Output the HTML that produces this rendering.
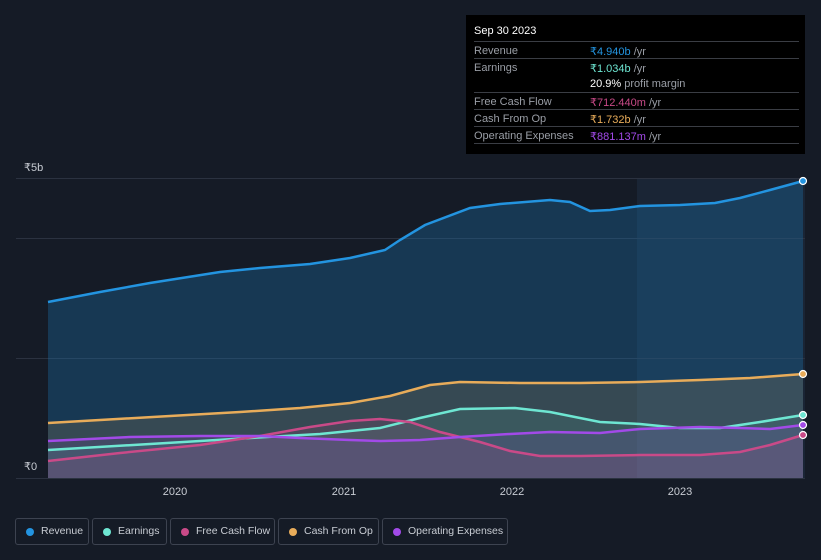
<!DOCTYPE html>
<html><head><style>
body{margin:0;background:#151b26;font-family:"Liberation Sans",sans-serif;width:821px;height:560px;overflow:hidden;position:relative}
.tt{position:absolute;left:466px;top:15px;width:339px;height:139px;background:#000;color:#fff;font-size:11px}
.tt .h{position:absolute;left:8px;top:10px;font-size:11px}
.row{position:absolute;left:8px;width:325px;height:17px;border-top:1px solid #3a3d44;color:#9a9ea6}
.row span{position:absolute;left:116px;top:3px}
.row b{font-weight:normal;position:absolute;left:0;top:3px}
.lg{position:absolute;top:518px;height:27px;border:1px solid #3d4350;border-radius:3px;color:#c8ccd3;font-size:10.5px;box-sizing:border-box;white-space:nowrap}
.lg i{position:absolute;left:10px;top:9px;width:8px;height:8px;border-radius:50%}
.lg span{position:absolute;left:25px;top:6px}
</style></head><body>
<svg width="821" height="560" style="position:absolute;left:0;top:0">
<rect x="637" y="178" width="168" height="300" fill="#1a2535"/>
<g stroke="#2b3240" stroke-width="1"><line x1="16" y1="178.5" x2="805" y2="178.5"/><line x1="16" y1="238.5" x2="805" y2="238.5"/><line x1="16" y1="358.5" x2="805" y2="358.5"/><line x1="16" y1="478.5" x2="805" y2="478.5"/></g>
<text x="24" y="171" fill="#c8ccd3" font-size="11">₹5b</text>
<text x="24" y="470" fill="#c8ccd3" font-size="11">₹0</text>
<g fill="#c8ccd3" font-size="11" text-anchor="middle"><text x="175" y="495">2020</text><text x="344" y="495">2021</text><text x="512" y="495">2022</text><text x="680" y="495">2023</text></g>
<path d="M48,302 L100,292 L150,283 L220,272 L260,268 L310,264 L350,258 L385,250 L400,240 L425,225 L470,208 L500,204 L550,200 L570,202 L590,211 L610,210 L640,206 L680,205 L715,203 L740,198 L770,190 L803,181 L803,478 L48,478Z" fill="#1e6fa8" fill-opacity="0.35"/>
<path d="M48,423 L100,420 L170,416 L240,412 L300,408 L350,403 L390,396 L430,385 L460,382 L520,383 L580,383 L640,382 L700,380 L750,378 L803,374 L803,478 L48,478Z" fill="#e8ac5a" fill-opacity="0.15"/>
<path d="M48,450 L150,444 L250,438 L320,434 L380,428 L420,418 L460,409 L515,408 L550,412 L600,422 L640,424 L680,428 L720,428 L760,422 L803,415 L803,478 L48,478Z" fill="#5ee0c8" fill-opacity="0.1"/>
<path d="M48,461 L120,453 L200,445 L260,436 L310,427 L350,421 L380,419 L410,422 L440,432 L480,442 L510,451 L540,456 L580,456 L640,455 L700,455 L740,452 L770,445 L803,435 L803,478 L48,478Z" fill="#c04a85" fill-opacity="0.15"/>
<path d="M48,441 L130,437 L200,436 L260,436 L300,438 L350,440 L380,441 L420,440 L460,437 L510,434 L550,432 L600,433 L640,429 L700,427 L740,428 L770,429 L803,425 L803,478 L48,478Z" fill="#9b4ae8" fill-opacity="0.12"/>
<g fill="none" stroke-width="2.5">
<path d="M48,302 L100,292 L150,283 L220,272 L260,268 L310,264 L350,258 L385,250 L400,240 L425,225 L470,208 L500,204 L550,200 L570,202 L590,211 L610,210 L640,206 L680,205 L715,203 L740,198 L770,190 L803,181" stroke="#2394e0"/>
<path d="M48,423 L100,420 L170,416 L240,412 L300,408 L350,403 L390,396 L430,385 L460,382 L520,383 L580,383 L640,382 L700,380 L750,378 L803,374" stroke="#e8ac5a"/>
<path d="M48,450 L150,444 L250,438 L320,434 L380,428 L420,418 L460,409 L515,408 L550,412 L600,422 L640,424 L680,428 L720,428 L760,422 L803,415" stroke="#6ee6d2"/>
<path d="M48,461 L120,453 L200,445 L260,436 L310,427 L350,421 L380,419 L410,422 L440,432 L480,442 L510,451 L540,456 L580,456 L640,455 L700,455 L740,452 L770,445 L803,435" stroke="#c94a88"/>
<path d="M48,441 L130,437 L200,436 L260,436 L300,438 L350,440 L380,441 L420,440 L460,437 L510,434 L550,432 L600,433 L640,429 L700,427 L740,428 L770,429 L803,425" stroke="#a24ae8"/>
</g>
<g stroke="#fff" stroke-width="1.2"><circle cx="803" cy="181" r="3.5" fill="#2394e0"/><circle cx="803" cy="374" r="3.5" fill="#e8ac5a"/><circle cx="803" cy="415" r="3.5" fill="#6ee6d2"/><circle cx="803" cy="425" r="3.5" fill="#a24ae8"/><circle cx="803" cy="435" r="3.5" fill="#c94a88"/></g>
</svg>
<div class="tt">
<div class="h">Sep 30 2023</div>
<div class="row" style="top:26px"><b>Revenue</b><span><font color="#2394e0">₹4.940b</font> /yr</span></div>
<div class="row" style="top:43px"><b>Earnings</b><span><font color="#6ee6d2">₹1.034b</font> /yr</span></div>
<div class="row" style="top:60px;border-top:none"><span><font color="#fff">20.9%</font> profit margin</span></div>
<div class="row" style="top:77px"><b>Free Cash Flow</b><span><font color="#c94a88">₹712.440m</font> /yr</span></div>
<div class="row" style="top:94px"><b>Cash From Op</b><span><font color="#e8ac5a">₹1.732b</font> /yr</span></div>
<div class="row" style="top:111px;height:0;"><b>Operating Expenses</b><span><font color="#a24ae8">₹881.137m</font> /yr</span></div>
<div class="row" style="top:128px;height:0"></div>
</div>
<div class="lg" style="left:15px;width:74px"><i style="background:#2394e0"></i><span>Revenue</span></div>
<div class="lg" style="left:92px;width:75px"><i style="background:#6ee6d2"></i><span>Earnings</span></div>
<div class="lg" style="left:170px;width:105px"><i style="background:#c94a88"></i><span>Free Cash Flow</span></div>
<div class="lg" style="left:278px;width:101px"><i style="background:#e8ac5a"></i><span>Cash From Op</span></div>
<div class="lg" style="left:382px;width:126px"><i style="background:#a24ae8"></i><span>Operating Expenses</span></div>
</body></html>
